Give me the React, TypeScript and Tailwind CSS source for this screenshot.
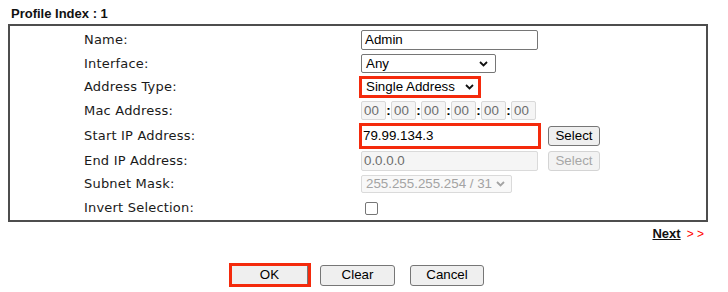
import React from 'react';

const RED = 'border-[#f42a0c]';

const Chevron = ({ muted }: { muted?: boolean }) => (
  <svg width="9" height="6" viewBox="0 0 9 6" className={muted ? 'text-[#a3a3a3]' : 'text-[#111]'}>
    <path d="M1 1l3.5 3.5L8 1" stroke="currentColor" strokeWidth="1.8" fill="none" />
  </svg>
);

const Label = ({ children }: { children: React.ReactNode }) => (
  <div className="w-[351px] shrink-0 pl-[74px] text-[13px] tracking-[0.2px] text-[#1a1a1a] font-['DejaVu_Sans',sans-serif]">
    {children}
  </div>
);

const Row = ({ h, label, children }: { h: string; label: string; children: React.ReactNode }) => (
  <div className={`flex items-center ${h}`}>
    <Label>{label}</Label>
    <div className="flex items-center">{children}</div>
  </div>
);

const MacBox = () => (
  <div className="w-[25px] h-[19px] flex items-center pl-[2px] bg-[#f5f5f5] border border-[#d9d9d9] rounded-[2px] text-[#6d6d6d]">
    00
  </div>
);

export default function App() {
  return (
    <div className="w-[728px] h-[292px] bg-white font-['Liberation_Sans',Arial,sans-serif] text-[13.33px] text-black">
      {/* header */}
      <div className="pt-[6px] pl-[11px] leading-[15px] text-[13px] font-bold text-[#111]">Profile Index : 1</div>

      {/* form table */}
      <div className="mt-[3px] ml-[8px] w-[700px] border-2 border-[#4d4d4d] pt-[2px]">
        <Row h="h-[24px]" label="Name:">
          <div className="w-[177px] h-[20px] flex items-center pl-[3px] border border-[#767676] rounded-[2px]">Admin</div>
        </Row>
        <Row h="h-[23px]" label="Interface:">
          <div className="w-[135px] h-[19px] flex items-center justify-between pl-[4px] pr-[7px] border border-[#767676] rounded-[2px]">
            <span>Any</span>
            <Chevron />
          </div>
        </Row>
        <Row h="h-[24px]" label="Address Type:">
          <div className={`-ml-[2px] w-[122px] h-[22px] border-[3px] ${RED} bg-white flex items-center justify-between pl-[4px] pr-[4px]`}>
            <span>Single Address</span>
            <Chevron />
          </div>
        </Row>
        <Row h="h-[23px]" label="Mac Address:">
          {[0, 1, 2, 3, 4, 5].map((i) => (
            <React.Fragment key={i}>
              {i > 0 && <span className="w-[5px] text-center font-bold leading-none">:</span>}
              <MacBox />
            </React.Fragment>
          ))}
        </Row>
        <Row h="h-[27px]" label="Start IP Address:">
          <div className={`-ml-[2px] w-[182px] h-[26px] border-[3px] ${RED} bg-white flex items-center pl-[1px]`}>79.99.134.3</div>
          <div className="ml-[7px] w-[52px] h-[20px] flex items-center justify-center bg-[#efefef] border border-[#767676] rounded-[3px]">Select</div>
        </Row>
        <Row h="h-[23px]" label="End IP Address:">
          <div className="w-[177px] h-[20px] flex items-center pl-[2px] bg-[#f5f5f5] border border-[#dadada] rounded-[2px] text-[#6d6d6d]">0.0.0.0</div>
          <div className="ml-[10px] w-[52px] h-[20px] flex items-center justify-center bg-[#f3f3f3] border border-[#d4d4d4] rounded-[3px] text-[#a7a7a7]">Select</div>
        </Row>
        <Row h="h-[24px]" label="Subnet Mask:">
          <div className="w-[151px] h-[18px] flex items-center justify-between pl-[4px] pr-[6px] bg-[#f8f8f8] border border-[#dadada] rounded-[2px] text-[#a3a3a3]">
            <span>255.255.255.254 / 31</span>
            <Chevron muted />
          </div>
        </Row>
        <Row h="h-[24px]" label="Invert Selection:">
          <div className="ml-[4px] w-[13px] h-[13px] border border-[#767676] rounded-[2px] bg-white" />
        </Row>
      </div>

      {/* next link */}
      <div className="mt-[4px] flex justify-end items-baseline pr-[24px] leading-[15px]">
        <span className="text-[13px] font-bold underline text-[#111]">Next</span>
        <span className="ml-[6px] text-[12px] text-[#ff0000]">&gt; &gt;</span>
      </div>

      {/* buttons */}
      <div className="mt-[21px] flex items-center pl-[229px]">
        <div className={`w-[82px] h-[24px] border-[3px] ${RED} bg-[#efefef] flex items-center justify-center`}>
          <div className="w-full h-full flex items-center justify-center border-r border-[#767676]">OK</div>
        </div>
        <div className="ml-[9px] w-[75px] h-[21px] flex items-center justify-center bg-[#efefef] border border-[#767676] rounded-[3px]">Clear</div>
        <div className="ml-[15px] w-[74px] h-[21px] flex items-center justify-center bg-[#efefef] border border-[#767676] rounded-[3px]">Cancel</div>
      </div>
    </div>
  );
}
